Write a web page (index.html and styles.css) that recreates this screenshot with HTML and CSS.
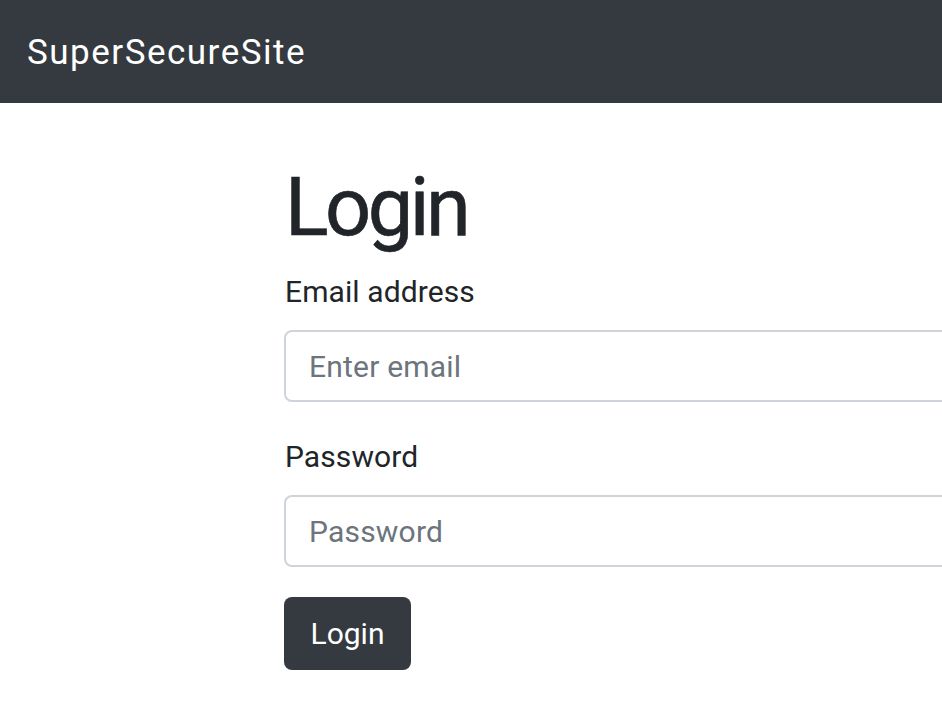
FILE: index.html
```html
<!DOCTYPE html>
<html lang="en">
<head>
<meta charset="utf-8">
<title>SuperSecureSite - Login</title>
<link rel="stylesheet" href="styles.css">
</head>
<body>
<nav class="navbar">
  <a class="brand" href="#">SuperSecureSite</a>
</nav>
<main class="container">
  <h1 class="title">Login</h1>
  <form class="login-form">
    <div class="form-group">
      <label class="label" for="email">Email address</label>
      <input class="input" type="email" id="email" placeholder="Enter email">
    </div>
    <div class="form-group">
      <label class="label" for="password">Password</label>
      <input class="input" type="password" id="password" placeholder="Password">
    </div>
    <button class="btn" type="submit">Login</button>
  </form>
</main>
</body>
</html>
```
FILE: styles.css
```css
* { box-sizing: border-box; }
html, body {
  margin: 0;
  padding: 0;
  overflow: hidden;
  background: #fff;
  font-family: Roboto, "Liberation Sans", Arial, sans-serif;
  color: #212529;
}
.navbar {
  height: 103px;
  background: #343a40;
  display: flex;
  align-items: center;
  padding-left: 27px;
}
.brand {
  color: #fff;
  text-decoration: none;
  font-size: 35px;
  letter-spacing: 1.5px;
  line-height: 1;
  padding-top: 2px;
}
.container {
  padding-left: 284px;
  width: 1400px;
}
.title {
  margin: 56px 0 12px 1px;
  font-size: 81px;
  line-height: 98px;
  font-weight: 400;
  letter-spacing: -3.5px;
  -webkit-text-stroke: 0.6px #212529;
}
.login-form { width: 800px; }
.form-group { margin-bottom: 32px; }
.form-group:last-of-type { margin-bottom: 30px; }
.label {
  display: block;
  font-size: 30px;
  line-height: 45px;
  letter-spacing: 0.1px;
  margin: 0 0 16px 1px;
}
.input {
  display: block;
  width: 100%;
  height: 72px;
  border: 2px solid #ced4da;
  border-radius: 8px;
  padding: 0 23px;
  font-family: inherit;
  font-size: 30px;
  letter-spacing: 0.2px;
  color: #495057;
  background: #fff;
}
.input::placeholder { color: #6c757d; opacity: 1; }
.btn {
  display: block;
  width: 127px;
  height: 73px;
  border: none;
  border-radius: 8px;
  background: #343a40;
  color: #fff;
  font-family: inherit;
  font-size: 30px;
  padding: 0;
}
```
